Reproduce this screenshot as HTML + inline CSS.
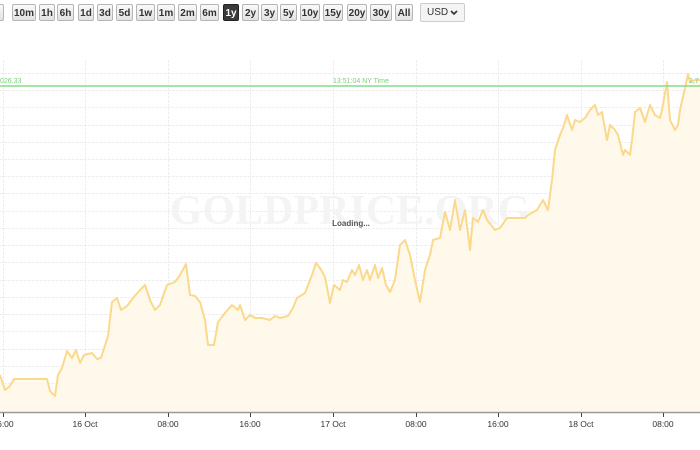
<!DOCTYPE html>
<html><head><meta charset="utf-8"><style>
body{margin:0;width:700px;height:450px;background:#fff;overflow:hidden;font-family:"Liberation Sans",Arial,sans-serif;position:relative}
.b{position:absolute;top:4px;height:17px;border:1px solid #b5b5b5;border-radius:2px;background:linear-gradient(#fafafa,#e2e2e2);font-size:10px;font-weight:bold;color:#333;line-height:17px;text-align:center;box-sizing:border-box}
.on{background:#3a3a3a;color:#fff;border-color:#222}
.sel{position:absolute;left:420px;top:3px;width:45px;height:19px;border:1px solid #ccc;border-radius:2px;background:#f4f4f4;font-size:10px;color:#333;line-height:17px;box-sizing:border-box;padding-left:6px}
</style></head><body>
<div class="b" style="left:-12px;width:16px"></div>
<div class="b" style="left:12px;width:24px">10m</div>
<div class="b" style="left:39px;width:16px">1h</div>
<div class="b" style="left:57px;width:17px">6h</div>
<div class="b" style="left:78px;width:16px">1d</div>
<div class="b" style="left:97px;width:16px">3d</div>
<div class="b" style="left:116px;width:17px">5d</div>
<div class="b" style="left:136px;width:19px">1w</div>
<div class="b" style="left:157px;width:18px">1m</div>
<div class="b" style="left:178px;width:19px">2m</div>
<div class="b" style="left:200px;width:19px">6m</div>
<div class="b on" style="left:223px;width:16px">1y</div>
<div class="b" style="left:242px;width:17px">2y</div>
<div class="b" style="left:261px;width:17px">3y</div>
<div class="b" style="left:280px;width:17px">5y</div>
<div class="b" style="left:300px;width:20px">10y</div>
<div class="b" style="left:323px;width:20px">15y</div>
<div class="b" style="left:347px;width:20px">20y</div>
<div class="b" style="left:370px;width:22px">30y</div>
<div class="b" style="left:395px;width:18px">All</div>
<div class="sel">USD <svg width="8" height="6" style="position:absolute;right:6px;top:6px"><path d="M1,1 L4,4 L7,1" fill="none" stroke="#333" stroke-width="1.6"/></svg></div>
<svg width="700" height="450" style="position:absolute;left:0;top:0" xmlns="http://www.w3.org/2000/svg">
<g stroke="#eeeeee" stroke-width="1" stroke-dasharray="3,1">
<line x1="0" y1="73.5" x2="700" y2="73.5"/><line x1="0" y1="90.5" x2="700" y2="90.5"/><line x1="0" y1="107.5" x2="700" y2="107.5"/><line x1="0" y1="125.5" x2="700" y2="125.5"/><line x1="0" y1="142.5" x2="700" y2="142.5"/><line x1="0" y1="159.5" x2="700" y2="159.5"/><line x1="0" y1="176.5" x2="700" y2="176.5"/><line x1="0" y1="193.5" x2="700" y2="193.5"/><line x1="0" y1="211.5" x2="700" y2="211.5"/><line x1="0" y1="228.5" x2="700" y2="228.5"/><line x1="0" y1="245.5" x2="700" y2="245.5"/><line x1="0" y1="262.5" x2="700" y2="262.5"/><line x1="0" y1="280.5" x2="700" y2="280.5"/><line x1="0" y1="297.5" x2="700" y2="297.5"/><line x1="0" y1="314.5" x2="700" y2="314.5"/><line x1="0" y1="331.5" x2="700" y2="331.5"/><line x1="0" y1="349.5" x2="700" y2="349.5"/><line x1="0" y1="366.5" x2="700" y2="366.5"/><line x1="0" y1="383.5" x2="700" y2="383.5"/><line x1="0" y1="400.5" x2="700" y2="400.5"/>
<line x1="3.5" y1="60" x2="3.5" y2="412"/><line x1="85.5" y1="60" x2="85.5" y2="412"/><line x1="168.5" y1="60" x2="168.5" y2="412"/><line x1="250.5" y1="60" x2="250.5" y2="412"/><line x1="333.5" y1="60" x2="333.5" y2="412"/><line x1="416.5" y1="60" x2="416.5" y2="412"/><line x1="498.5" y1="60" x2="498.5" y2="412"/><line x1="581.5" y1="60" x2="581.5" y2="412"/><line x1="663.5" y1="60" x2="663.5" y2="412"/>
</g>
<text x="350" y="224" text-anchor="middle" font-family="Liberation Serif,serif" font-weight="bold" font-size="42" fill="#f4f4f4">GOLDPRICE.ORG</text>
<path d="M0,375 L5,390 L10,386 L14,379 L47,379 L50,391 L55,396 L58,375 L62,368 L67,351 L72,358 L76,350 L80,363 L84,355 L92,353 L97,359 L101,358 L108,336 L112,302 L117,298 L121,310 L127,306 L133,298 L140,290 L145,285 L150,300 L155,310 L160,305 L167,285 L175,282 L180,275 L186,264 L190,295 L195,296 L200,302 L205,320 L208,345 L214,345 L218,322 L225,313 L232,305 L238,310 L240,305 L245,320 L250,315 L255,318 L262,318 L270,320 L275,316 L280,318 L288,316 L293,308 L297,298 L305,293 L312,275 L316,263 L320,268 L325,277 L330,303 L334,285 L340,290 L343,280 L347,282 L352,270 L355,275 L359,265 L363,280 L367,270 L370,280 L375,265 L378,278 L382,268 L386,285 L390,292 L395,280 L400,245 L405,240 L410,255 L415,280 L420,302 L425,270 L430,255 L433,240 L440,238 L445,212 L450,230 L455,200 L460,230 L465,210 L470,250 L473,218 L478,222 L483,210 L487,220 L495,230 L500,228 L507,218 L525,218 L528,215 L537,210 L543,200 L548,210 L552,180 L555,150 L560,135 L563,128 L567,115 L572,130 L575,120 L580,122 L585,118 L590,110 L595,105 L598,115 L602,112 L607,140 L610,125 L615,130 L618,135 L623,155 L625,150 L630,155 L632,140 L635,112 L640,108 L645,122 L650,105 L655,115 L660,118 L662,110 L667,82 L670,120 L675,130 L678,125 L680,110 L685,88 L688,74 L690,82 L695,80 L700,80 L700,412 L0,412 Z" fill="#fff8e8" fill-opacity="0.85" stroke="none"/>
<path d="M0,375 L5,390 L10,386 L14,379 L47,379 L50,391 L55,396 L58,375 L62,368 L67,351 L72,358 L76,350 L80,363 L84,355 L92,353 L97,359 L101,358 L108,336 L112,302 L117,298 L121,310 L127,306 L133,298 L140,290 L145,285 L150,300 L155,310 L160,305 L167,285 L175,282 L180,275 L186,264 L190,295 L195,296 L200,302 L205,320 L208,345 L214,345 L218,322 L225,313 L232,305 L238,310 L240,305 L245,320 L250,315 L255,318 L262,318 L270,320 L275,316 L280,318 L288,316 L293,308 L297,298 L305,293 L312,275 L316,263 L320,268 L325,277 L330,303 L334,285 L340,290 L343,280 L347,282 L352,270 L355,275 L359,265 L363,280 L367,270 L370,280 L375,265 L378,278 L382,268 L386,285 L390,292 L395,280 L400,245 L405,240 L410,255 L415,280 L420,302 L425,270 L430,255 L433,240 L440,238 L445,212 L450,230 L455,200 L460,230 L465,210 L470,250 L473,218 L478,222 L483,210 L487,220 L495,230 L500,228 L507,218 L525,218 L528,215 L537,210 L543,200 L548,210 L552,180 L555,150 L560,135 L563,128 L567,115 L572,130 L575,120 L580,122 L585,118 L590,110 L595,105 L598,115 L602,112 L607,140 L610,125 L615,130 L618,135 L623,155 L625,150 L630,155 L632,140 L635,112 L640,108 L645,122 L650,105 L655,115 L660,118 L662,110 L667,82 L670,120 L675,130 L678,125 L680,110 L685,88 L688,74 L690,82 L695,80 L700,80" fill="none" stroke="#fbd98c" stroke-width="2" stroke-linejoin="round"/>
<line x1="0" y1="86" x2="700" y2="86" stroke="#86dc86" stroke-width="1.5"/>
<text x="0" y="83" font-size="7" fill="#7ccf7c">026.33</text>
<text x="333" y="83" font-size="7" fill="#7ccf7c">13:51:04 NY Time</text>
<text x="689" y="83" font-size="7" fill="#7ccf7c">2,7</text>
<text x="351" y="226" text-anchor="middle" font-size="8" font-weight="bold" fill="#555">Loading...</text>
<line x1="0" y1="412.5" x2="700" y2="412.5" stroke="#999" stroke-width="1.5"/>
<g stroke="#444" stroke-width="1"><line x1="3.5" y1="413" x2="3.5" y2="417"/><line x1="85.5" y1="413" x2="85.5" y2="417"/><line x1="168.5" y1="413" x2="168.5" y2="417"/><line x1="250.5" y1="413" x2="250.5" y2="417"/><line x1="333.5" y1="413" x2="333.5" y2="417"/><line x1="416.5" y1="413" x2="416.5" y2="417"/><line x1="498.5" y1="413" x2="498.5" y2="417"/><line x1="581.5" y1="413" x2="581.5" y2="417"/><line x1="663.5" y1="413" x2="663.5" y2="417"/></g>
<g font-size="8.5" fill="#333" text-anchor="middle">
<text x="3" y="427">16:00</text><text x="85" y="427">16 Oct</text><text x="168" y="427">08:00</text><text x="250" y="427">16:00</text><text x="333" y="427">17 Oct</text><text x="416" y="427">08:00</text><text x="498" y="427">16:00</text><text x="581" y="427">18 Oct</text><text x="663" y="427">08:00</text>
</g>
</svg>
</body></html>
